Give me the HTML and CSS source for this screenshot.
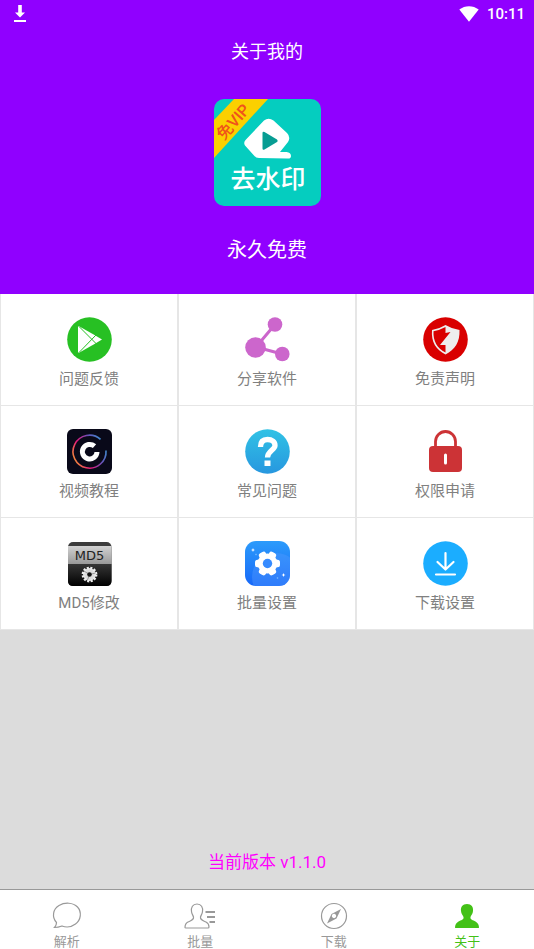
FILE: index.html
```html
<!DOCTYPE html>
<html lang="zh-CN">
<head>
    <meta charset="UTF-8">
    <meta name="viewport" content="width=device-width, initial-scale=1">
    <title>关于我的</title>
    <link rel="stylesheet" href="styles.css">
</head>
<body>
    <header class="header">
        <div class="status-bar">
            <svg width="14" height="18" viewBox="0 0 14 18" fill="#fff">
                <path d="M5.2 0h3.6v7.500h3.200L7 12.500 2 7.500h3.200zM1 15h12v2H1z"/>
            </svg>
            <div class="status-right">
                <svg width="20" height="16" viewBox="0 0 20 16" fill="#fff">
                    <path d="M.3 3.600C6-.9 14-.9 19.700 3.600L10 15.700z"/>
                </svg>
                <span>10:11</span>
            </div>
        </div>
        <h1 class="title">关于我的</h1>
        <svg class="logo" viewBox="0 0 107 107">
            <defs>
                <clipPath id="logoClip"><rect width="107" height="107" rx="10"/></clipPath>
            </defs>
            <g clip-path="url(#logoClip)">
                <rect width="107" height="107" fill="#05cdbf"/>
                <path d="M20 0h34L0 59V21z" fill="#fbd000"/>
            </g>
            <text class="logo-ribbon" transform="translate(10 42) rotate(-49)">免VIP</text>
            <path d="M50 21.500Q54.500 18 59.500 21.500L73 34Q77 38 74 43L66 53H72.500Q77 53.500 77 57Q77 60 73 59.500L45 59Q42 59 40 56.500L31 46.500Q29 43.500 32 40.500Z" fill="#fff"/>
            <path d="M48.500 34v15.500q0 2 2 1L63 43q1.500-1 0-2.500L50.500 33q-2-1-2 1z" fill="#079d93"/>
            <text class="logo-name" x="54" y="89" text-anchor="middle">去水印</text>
        </svg>
        <p class="slogan">永久免费</p>
    </header>

    <main class="content">
        <div class="menu">
            <button class="menu-item" type="button">
                <svg class="menu-icon" viewBox="0 0 45 45">
                    <circle cx="22.500" cy="22.500" r="22.300" fill="#27c023"/>
                    <path d="M11 10Q11 9 12 9.300L27.500 18 35 22.500 27.500 27 12 35.800Q11 36 11 35z" fill="#fff"/>
                    <path d="M12 9.500L29.500 27M12 35.500L29.500 17.500" stroke="#27c023" fill="none"/>
                </svg>
                <span>问题反馈</span>
            </button>
            <button class="menu-item" type="button">
                <svg class="menu-icon" viewBox="0 0 45 45" fill="#cc66cc">
                    <path d="M11 30L30 7.500M11 30l26 7" stroke="#cc66cc" stroke-width="3"/>
                    <circle cx="30" cy="7.500" r="7.300"/>
                    <circle cx="10.500" cy="30.500" r="10.300"/>
                    <circle cx="37.300" cy="37" r="7.300"/>
                </svg>
                <span>分享软件</span>
            </button>
            <button class="menu-item" type="button">
                <svg class="menu-icon" viewBox="0 0 45 45">
                    <circle cx="22.500" cy="22.500" r="22.300" fill="#d90000"/>
                    <path d="M22.500 8Q29 12 36.500 13C37 25 32 32.500 22.500 37.500C13 32.500 8 25 9 13Q16 12 22.500 8z" fill="#eee"/>
                    <path d="M22.500 10V16L27.500 15 17 28H22.500V35.500C14 31 10 24 10.500 14.200Q17 13 22.500 10z" fill="#d90000"/>
                </svg>
                <span>免责声明</span>
            </button>
            <button class="menu-item" type="button">
                <svg class="menu-icon" viewBox="0 0 45 45">
                    <defs>
                        <linearGradient id="ring" x1="0" y1=".7" x2="1" y2=".2">
                            <stop offset="0" stop-color="#f28a3a"/>
                            <stop offset=".3" stop-color="#e5177a"/>
                            <stop offset=".65" stop-color="#6553b8"/>
                            <stop offset="1" stop-color="#34a0d8"/>
                        </linearGradient>
                    </defs>
                    <rect width="45" height="45" rx="6" fill="#090919"/>
                    <path d="M33.500 10.300A16.500 16.500 0 1 0 39 21.500" stroke="url(#ring)" stroke-width="1.600" fill="none"/>
                    <path d="M27.500 17.200A7.300 7.300 0 1 0 30 23" stroke="#fff" stroke-width="5" fill="none"/>
                </svg>
                <span>视频教程</span>
            </button>
            <button class="menu-item" type="button">
                <svg class="menu-icon" viewBox="0 0 45 45">
                    <defs>
                        <linearGradient id="help" x1="0" y1="0" x2="0" y2="1">
                            <stop offset="0" stop-color="#31c2e5"/>
                            <stop offset="1" stop-color="#2797df"/>
                        </linearGradient>
                    </defs>
                    <circle cx="22.500" cy="22.500" r="22.300" fill="url(#help)"/>
                    <path d="M15.500 18C15.500 13 18 10.500 22.500 10.500S30 12.800 30 16.500C30 21 22.500 22 22.500 28.500" stroke="#fff" stroke-width="5.300" fill="none"/>
                    <rect x="19.500" y="31.500" width="6" height="5.500" fill="#fff"/>
                </svg>
                <span>常见问题</span>
            </button>
            <button class="menu-item" type="button">
                <svg class="menu-icon" viewBox="0 0 45 45">
                    <path d="M12.500 18V12.500a10 10 0 0 1 20 0V18" stroke="#cc3336" stroke-width="2.800" fill="none"/>
                    <rect x="6" y="17" width="33" height="26" rx="4" fill="#cc3336"/>
                    <rect x="21" y="24.500" width="3" height="11" rx="1.500" fill="#fff"/>
                </svg>
                <span>权限申请</span>
            </button>
            <button class="menu-item" type="button">
                <svg class="menu-icon" viewBox="0 0 45 45">
                    <defs>
                        <linearGradient id="plate" x1="0" y1="0" x2="0" y2="1">
                            <stop offset="0" stop-color="#d2d2d2"/>
                            <stop offset="1" stop-color="#999"/>
                        </linearGradient>
                        <linearGradient id="base" x1="0" y1="0" x2="0" y2="1">
                            <stop offset="0" stop-color="#363636"/>
                            <stop offset="1" stop-color="#000"/>
                        </linearGradient>
                    </defs>
                    <rect x="1" y="1" width="43.500" height="44" rx="5" fill="#3c3c3c"/>
                    <path d="M1 5h43.500v18H1z" fill="url(#plate)"/>
                    <path d="M1 23h43.500v17q0 5-5 5H6q-5 0-5-5z" fill="url(#base)"/>
                    <text class="md5" x="22.500" y="19" text-anchor="middle">MD5</text>
                    <circle cx="22.500" cy="33.500" r="6.500" fill="#ddd" stroke="#eee" stroke-width="2.800" stroke-dasharray="2 1.403"/>
                    <path d="M22.500 33.500L17 30M22.500 33.500l6-1.500M22.500 33.500l-2 5.500" stroke="#999"/>
                    <circle cx="22.500" cy="33.500" r="2.300" fill="#151515"/>
                </svg>
                <span>MD5修改</span>
            </button>
            <button class="menu-item" type="button">
                <svg class="menu-icon" viewBox="0 0 45 45">
                    <defs>
                        <linearGradient id="batch" x1="0" y1="0" x2="0" y2="1">
                            <stop offset="0" stop-color="#2c9bfb"/>
                            <stop offset="1" stop-color="#1768f8"/>
                        </linearGradient>
                        <clipPath id="batchClip"><rect width="45" height="45" rx="11"/></clipPath>
                    </defs>
                    <g clip-path="url(#batchClip)">
                        <rect width="45" height="45" fill="url(#batch)"/>
                        <circle cx="31" cy="36" r="24" fill="#549bff" opacity=".4"/>
                    </g>
                    <g fill="#fff">
                        <circle cx="22.500" cy="22.500" r="10"/>
                        <rect x="10" y="18.700" width="25" height="7.600" rx="2.500"/>
                        <rect x="10" y="18.700" width="25" height="7.600" rx="2.500" transform="rotate(60 22.500 22.500)"/>
                        <rect x="10" y="18.700" width="25" height="7.600" rx="2.500" transform="rotate(-60 22.500 22.500)"/>
                        <path d="M8 7l.6 1.400 1.400.6-1.400.6L8 11l-.6-1.400L6 9l1.400-.6zM38.500 32l.6 1.400 1.400.6-1.400.6-.6 1.400-.6-1.400-1.400-.6 1.400-.6z"/>
                    </g>
                    <circle cx="22.500" cy="22.500" r="4.700" fill="#368bff"/>
                    <path d="M11 12.500l1 1-1 1-1-1zM32.500 36l1 1-1 1-1-1z" fill="#75b8ff"/>
                </svg>
                <span>批量设置</span>
            </button>
            <button class="menu-item" type="button">
                <svg class="menu-icon" viewBox="0 0 45 45">
                    <circle cx="22.500" cy="22.500" r="22.300" fill="#1badff"/>
                    <path d="M22.500 12v16M14.500 21l8 7.500 8-7.500M13 33.500h19" stroke="#fff" stroke-width="2.200" stroke-linecap="round" stroke-linejoin="round" fill="none"/>
                </svg>
                <span>下载设置</span>
            </button>
        </div>
        <p class="version">当前版本 v1.1.0</p>
    </main>

    <nav class="tab-bar">
        <a class="tab" href="#parse">
            <svg class="tab-icon" viewBox="0 0 32 28">
                <path d="M5.500 20.500C.5 15 2 7 8 3.500C14 0 22 .5 26.500 5C31 10 30 18 24.500 22C20.500 25 15 25.500 11 24Q7 25.500 3.500 25.500Q5.500 23.500 5.500 20.500z"/>
            </svg>
            <span>解析</span>
        </a>
        <a class="tab" href="#batch-list">
            <svg class="tab-icon" viewBox="0 0 32 28">
                <path d="M13 2C8.500 2 7 5.500 7.500 9.500C7.700 12 9 13 9.500 15C10 18 7 18.500 4 20Q1 21.500 1 25.500Q1 26 2 26H24Q25 26 25 25Q25 21.500 22 20C19 18.500 16 18 16.500 15C17 13 18.300 12 18.500 9.500C19 5.500 17.500 2 13 2z"/>
                <path class="lines" d="M21.500 10H31M23 15h8M25.500 20H31"/>
            </svg>
            <span>批量</span>
        </a>
        <a class="tab" href="#download">
            <svg class="tab-icon" viewBox="0 0 32 28">
                <circle cx="16" cy="14" r="12.500"/>
                <path class="solid" fill-rule="evenodd" d="M23 7l-4.500 9.500L9 21.500l4.500-9.500zM16 11.800a2.200 2.200 0 1 0 .01 0z"/>
            </svg>
            <span>下载</span>
        </a>
        <a class="tab active" href="#about">
            <svg class="tab-icon" viewBox="0 0 32 28">
                <path class="solid" d="M16 2C11.500 2 9.500 5 10 9C10.200 12 12 13 12.500 15C13 18 10 18 7.500 19.500Q4 21.500 4 25.500Q4 26 5 26H27Q28 26 28 25.500Q28 21.500 24.500 19.500C22 18 19 18 19.500 15C20 13 21.800 12 22 9C22.500 5 20.500 2 16 2z"/>
            </svg>
            <span>关于</span>
        </a>
    </nav>
</body>
</html>
```

FILE: styles.css
```css
* {
    box-sizing: border-box;
}
body {
    margin: 0;
    min-height: 100vh;
    display: flex;
    flex-direction: column;
    font-family: Roboto, "Noto Sans CJK SC", sans-serif;
    background-color: #dcdcdc;
}
h1, p {
    margin: 0;
    font-weight: normal;
}

/* header */
.header {
    display: flex;
    flex-direction: column;
    align-items: center;
    padding-bottom: 29px;
    background-color: #9000ff;
    color: white;
}
.status-bar {
    align-self: stretch;
    display: flex;
    justify-content: space-between;
    align-items: center;
    height: 28px;
    padding: 0 9px 0 13px;
}
.status-right {
    display: flex;
    align-items: center;
    gap: 8px;
    font-size: 15px;
    font-weight: 500;
}
.title {
    margin-top: 9px;
    font-size: 18px;
    line-height: 30px;
}
.logo {
    width: 107px;
    height: 107px;
    margin: 32px 0 29px;
}
.logo-ribbon {
    fill: #f0521b;
    font-size: 16px;
    font-weight: 500;
}
.logo-name {
    fill: white;
    font-size: 25px;
    font-weight: 500;
}
.slogan {
    font-size: 20px;
    line-height: 30px;
}

/* menu grid */
.content {
    flex: 1;
    display: flex;
    flex-direction: column;
    justify-content: space-between;
}
.menu {
    display: grid;
    grid-template-columns: repeat(3, 1fr);
}
.menu-item {
    display: flex;
    flex-direction: column;
    align-items: center;
    gap: 7px;
    padding: 23px 0 16px;
    border: 1px solid #e6e6e6;
    border-top: none;
    background-color: white;
    color: #808080;
    font-family: inherit;
    font-size: 15px;
    line-height: 20px;
    cursor: pointer;
}
.menu-icon {
    width: 45px;
    height: 45px;
}
.md5 {
    fill: #222;
    font-family: "DejaVu Sans", sans-serif;
    font-size: 13px;
}
.version {
    padding-bottom: 15px;
    color: #f0f;
    font-size: 17px;
    line-height: 24px;
    text-align: center;
}

/* bottom tabs */
.tab-bar {
    display: flex;
    border-top: 1px solid #999;
    background-color: white;
}
.tab {
    flex: 1;
    display: flex;
    flex-direction: column;
    align-items: center;
    gap: 4px;
    padding-top: 12px;
    color: #999;
    font-size: 13px;
    line-height: 15px;
    text-decoration: none;
}
.tab-icon {
    width: 32px;
    height: 28px;
    fill: none;
    stroke: currentColor;
    stroke-width: 1.2;
}
.tab-icon .solid {
    fill: currentColor;
    stroke: none;
}
.tab-icon .lines {
    stroke-width: 2;
}
.tab.active {
    color: #43c117;
}
```
